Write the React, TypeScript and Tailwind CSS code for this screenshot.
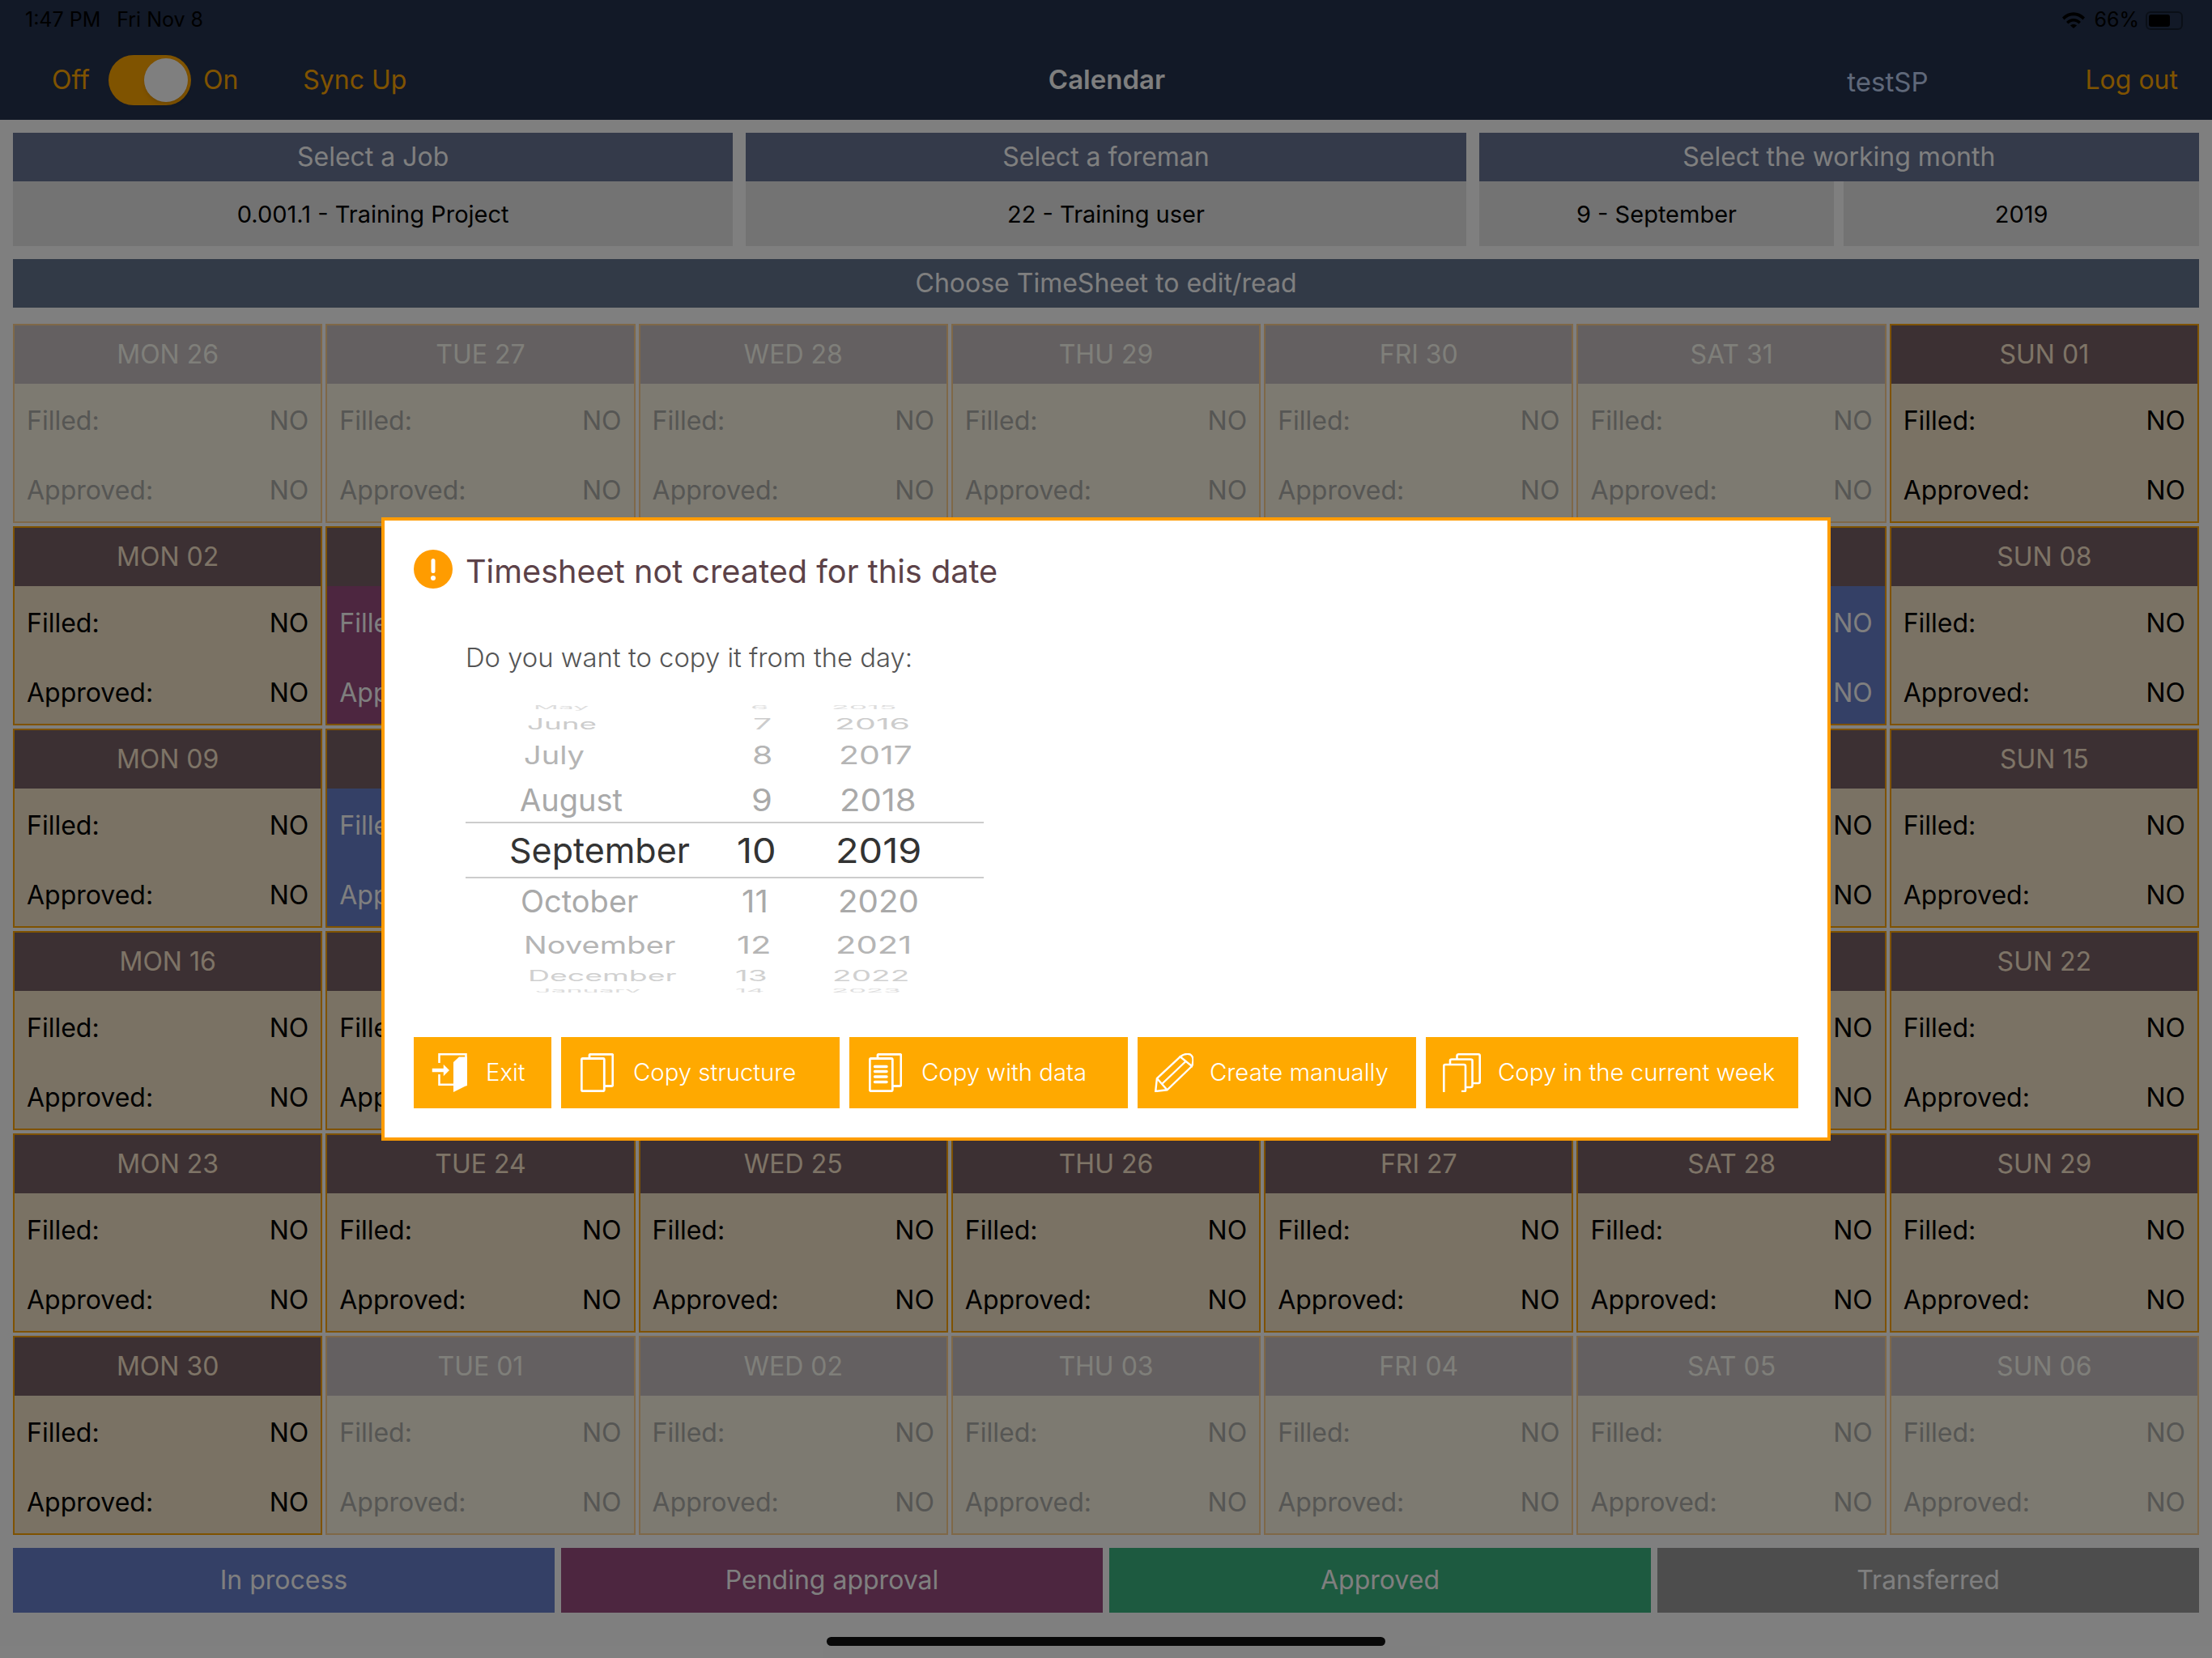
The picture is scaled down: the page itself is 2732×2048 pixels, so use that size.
import { ReactNode } from 'react';

type Status = 'off' | 'open' | 'process' | 'pending';

const weeks: { label: string; status: Status }[][] = [
  [
    { label: 'MON 26', status: 'off' },
    { label: 'TUE 27', status: 'off' },
    { label: 'WED 28', status: 'off' },
    { label: 'THU 29', status: 'off' },
    { label: 'FRI 30', status: 'off' },
    { label: 'SAT 31', status: 'off' },
    { label: 'SUN 01', status: 'open' },
  ],
  [
    { label: 'MON 02', status: 'open' },
    { label: 'TUE 03', status: 'pending' },
    { label: 'WED 04', status: 'open' },
    { label: 'THU 05', status: 'open' },
    { label: 'FRI 06', status: 'open' },
    { label: 'SAT 07', status: 'process' },
    { label: 'SUN 08', status: 'open' },
  ],
  [
    { label: 'MON 09', status: 'open' },
    { label: 'TUE 10', status: 'process' },
    { label: 'WED 11', status: 'open' },
    { label: 'THU 12', status: 'open' },
    { label: 'FRI 13', status: 'open' },
    { label: 'SAT 14', status: 'open' },
    { label: 'SUN 15', status: 'open' },
  ],
  [
    { label: 'MON 16', status: 'open' },
    { label: 'TUE 17', status: 'open' },
    { label: 'WED 18', status: 'open' },
    { label: 'THU 19', status: 'open' },
    { label: 'FRI 20', status: 'open' },
    { label: 'SAT 21', status: 'open' },
    { label: 'SUN 22', status: 'open' },
  ],
  [
    { label: 'MON 23', status: 'open' },
    { label: 'TUE 24', status: 'open' },
    { label: 'WED 25', status: 'open' },
    { label: 'THU 26', status: 'open' },
    { label: 'FRI 27', status: 'open' },
    { label: 'SAT 28', status: 'open' },
    { label: 'SUN 29', status: 'open' },
  ],
  [
    { label: 'MON 30', status: 'open' },
    { label: 'TUE 01', status: 'off' },
    { label: 'WED 02', status: 'off' },
    { label: 'THU 03', status: 'off' },
    { label: 'FRI 04', status: 'off' },
    { label: 'SAT 05', status: 'off' },
    { label: 'SUN 06', status: 'off' },
  ],
];

const cellStyles: Record<Status, { box: string; head: string; body: string }> = {
  off: {
    box: 'border-[#ffd090]',
    head: 'bg-[#c8c0c2] text-[#fffef4]',
    body: 'bg-[#faf4e2] text-[#acaca8]',
  },
  open: {
    box: 'border-[#ffa400]',
    head: 'bg-[#786066] text-[#fce8ce]',
    body: 'bg-[#f4e4c8] text-black',
  },
  process: {
    box: 'border-[#ffa400]',
    head: 'bg-[#786066] text-[#fce8ce]',
    body: 'bg-[#6880cc] text-white',
  },
  pending: {
    box: 'border-[#ffa400]',
    head: 'bg-[#786066] text-[#fce8ce]',
    body: 'bg-[#9a4c80] text-white',
  },
};

function DayCell({ label, status }: { label: string; status: Status }) {
  const s = cellStyles[status];
  return (
    <div className={`h-[246px] border-2 flex flex-col ${s.box}`}>
      <div className={`h-[72px] flex items-center justify-center text-[32px] ${s.head}`}>{label}</div>
      <div className={`flex-1 pl-[15px] pr-[15px] pt-[26px] flex flex-col gap-[46px] text-[32px] ${s.body}`}>
        <div className="flex justify-between leading-[40px]">
          <span>Filled:</span>
          <span>NO</span>
        </div>
        <div className="flex justify-between leading-[40px]">
          <span>Approved:</span>
          <span>NO</span>
        </div>
      </div>
    </div>
  );
}

function SelectBox({ title, children }: { title: string; children: ReactNode }) {
  return (
    <div>
      <div className="h-[60px] bg-[#687494] text-white text-[32px] flex items-center justify-center">{title}</div>
      <div className="h-[80px] flex gap-3 text-black text-[29px]">{children}</div>
    </div>
  );
}

function ValueCell({ text }: { text: string }) {
  return <div className="flex-1 bg-[#e6e6e6] flex items-center justify-center pt-px">{text}</div>;
}

const pickerRows = [
  { h: 'h-[12px]', color: 'text-[#dddddd]', size: 'text-[34px] scale-y-[0.18]', num: 'text-[34px] scale-y-[0.18] scale-x-[1.05]', month: 'May', mx: 'pl-[84px]', day: '6', dx: 'pl-[42px]', year: '2015', yx: 'pl-[27px]' },
  { h: 'h-[28px]', color: 'text-[#cccccc]', size: 'text-[38px] scale-y-[0.48] scale-x-[0.97]', num: 'text-[38px] scale-y-[0.48] scale-x-[1.08]', month: 'June', mx: 'pl-[76px]', day: '7', dx: 'pl-[45px]', year: '2016', yx: 'pl-[31px]' },
  { h: 'h-[50px]', color: 'text-[#b5b5b5]', size: 'text-[38px] scale-y-[0.82]', num: 'text-[38px] scale-y-[0.82] scale-x-[1.08]', month: 'July', mx: 'pl-[72px]', day: '8', dx: 'pl-[44px]', year: '2017', yx: 'pl-[36px]' },
  { h: 'h-[57px] pt-[2px]', color: 'text-[#a9a9a9]', size: 'text-[38px]', num: 'text-[38px] scale-x-[1.1]', month: 'August', mx: 'pl-[67px]', day: '9', dx: 'pl-[43px]', year: '2018', yx: 'pl-[37px]' },
  { h: 'h-[70px] border-y-2 border-[#cccccc]', color: 'text-[#333333]', size: 'text-[43px]', num: 'text-[43px] scale-x-[1.09]', month: 'September', mx: 'pl-[54px]', day: '10', dx: 'pl-[25px]', year: '2019', yx: 'pl-[32px]' },
  { h: 'h-[56px]', color: 'text-[#a9a9a9]', size: 'text-[38px]', num: 'text-[38px] scale-x-[1.06]', month: 'October', mx: 'pl-[68px]', day: '11', dx: 'pl-[31px]', year: '2020', yx: 'pl-[35px]' },
  { h: 'h-[52px]', color: 'text-[#b5b5b5]', size: 'text-[36px] scale-y-[0.82] scale-x-[1.06]', num: 'text-[36px] scale-y-[0.82] scale-x-[1.16]', month: 'November', mx: 'pl-[72px]', day: '12', dx: 'pl-[25px]', year: '2021', yx: 'pl-[32px]' },
  { h: 'h-[24px]', color: 'text-[#d0d0d0]', size: 'text-[38px] scale-y-[0.48] scale-x-[0.985]', num: 'text-[38px] scale-y-[0.48] scale-x-[1.02]', month: 'December', mx: 'pl-[77px]', day: '13', dx: 'pl-[23px]', year: '2022', yx: 'pl-[28px]' },
  { h: 'h-[14px]', color: 'text-[#dddddd]', size: 'text-[34px] scale-y-[0.18]', num: 'text-[34px] scale-y-[0.18] scale-x-[1.02]', month: 'January', mx: 'pl-[86px]', day: '14', dx: 'pl-[23px]', year: '2023', yx: 'pl-[27px]' },
];

function Picker() {
  return (
    <div className="mt-[36px] h-[358px] w-[640px] overflow-hidden">
      {pickerRows.map((r) => (
        <div key={r.month} className={`flex items-center ${r.h} ${r.color}`}>
          <div className={`w-[310px] ${r.mx}`}>
            <div className={`origin-left w-max leading-none ${r.size}`}>{r.month}</div>
          </div>
          <div className={`w-[115px] ${r.dx}`}>
            <div className={`origin-left w-max leading-none ${r.num}`}>{r.day}</div>
          </div>
          <div className={`w-[215px] ${r.yx}`}>
            <div className={`origin-left w-max leading-none ${r.num}`}>{r.year}</div>
          </div>
        </div>
      ))}
    </div>
  );
}

function ExitIcon() {
  return (
    <svg viewBox="0 0 44 48" className="w-[44px] h-[48px]" fill="none" stroke="white" strokeWidth="2.5">
      <path d="M9.5 12V1.3H42.5V39H34" />
      <path d="M9.5 26V38.7H27" />
      <path d="M27 11L34 4.5H44V39.5L27 48Z" fill="white" stroke="none" />
      <path d="M14 12L23 21L14 30V24H0V18H14Z" fill="white" stroke="#ffa900" strokeWidth="1.5" />
    </svg>
  );
}

function CopyIcon({ lines }: { lines?: boolean }) {
  return (
    <svg viewBox="0 0 41 48" className="w-[41px] h-[48px]" fill="none" stroke="white" strokeWidth="2.8">
      <path d="M11 6V2.5Q11 1.3 12.5 1.3H38.5Q39.8 1.3 39.8 2.5V39Q39.8 40.5 38.5 40.5H30" />
      <path d="M2.5 6.5H28Q29.3 6.5 29.3 8V45Q29.3 46.7 28 46.7H2.5Q1.3 46.7 1.3 45V8Q1.3 6.5 2.5 6.5Z" />
      {lines && <path d="M7.5 16.5H22M7.5 22.5H22M7.5 29H22M7.5 35.5H22" strokeWidth="3.5" strokeLinecap="round" />}
    </svg>
  );
}

function PencilIcon() {
  return (
    <svg viewBox="0 0 48 48" className="w-[48px] h-[48px]" fill="none" stroke="white" strokeWidth="2.4">
      <path d="M31.6 4.3L2.9 31L1.2 47L15.5 45.3L46 16" />
      <path d="M31.6 4.3Q38 -0.5 44 1.5Q48 4 47.5 10Q47 14 46 16L31.6 4.3Z" />
      <path d="M38.5 10L9 38M2.9 31L15.5 45.3" />
    </svg>
  );
}

function StackIcon() {
  return (
    <svg viewBox="0 0 47 48" className="w-[47px] h-[48px]" fill="none" stroke="white" strokeWidth="2.6">
      <path d="M1.3 48V16Q1.3 14 3 14H26Q28 14 28 16V46Q28 47 26.5 47H23" />
      <path d="M9 14V9Q9 7.5 11 7.5H34.5Q36.5 7.5 36.5 9V40Q36.5 42 34 42H28" />
      <path d="M17.5 7.5V3Q17.5 1.3 19.5 1.3H44Q45.7 1.3 45.7 3V35Q45.7 37 44 37H36.5" />
    </svg>
  );
}

const buttons = [
  { label: 'Exit', icon: <ExitIcon />, w: 'w-[170px]', pad: 'pl-[22px]', gap: 'gap-[23px]' },
  { label: 'Copy structure', icon: <CopyIcon />, w: 'w-[344px]', pad: 'pl-[24px]', gap: 'gap-[24px]' },
  { label: 'Copy with data', icon: <CopyIcon lines />, w: 'w-[344px]', pad: 'pl-[24px]', gap: 'gap-[24px]' },
  { label: 'Create manually', icon: <PencilIcon />, w: 'w-[344px]', pad: 'pl-[21px]', gap: 'gap-[20px]' },
  { label: 'Copy in the current week', icon: <StackIcon />, w: 'w-[460px]', pad: 'pl-[21px]', gap: 'gap-[21px]' },
];

function TimesheetModal() {
  return (
    <div className="absolute inset-0 bg-black/50 flex items-center justify-center">
      <div className="w-[1790px] h-[770px] bg-white border-4 border-[#ff9c00] p-[36px]">
        <div className="h-[48px] flex items-center gap-[16px]">
          <div className="w-[48px] h-[48px] rounded-full bg-[#ff9c00] flex items-center justify-center">
            <svg viewBox="0 0 48 48" className="w-[48px] h-[48px]" fill="white">
              <rect x="21.5" y="11" width="5" height="18" rx="2.5" />
              <circle cx="24" cy="35" r="3" />
            </svg>
          </div>
          <div className="text-[39.7px] leading-[48px] pt-[5px] text-[#5c4248]">Timesheet not created for this date</div>
        </div>
        <div className="pl-[64px]">
          <div className="mt-[65px] h-[40px] leading-[40px] text-[32.8px] font-light text-[#555555]">Do you want to copy it from the day:</div>
          <Picker />
        </div>
        <div className="mt-[55px] flex gap-3">
          {buttons.map((b) => (
            <div key={b.label} className={`h-[88px] bg-[#ffa900] flex items-center text-white text-[29.3px] font-light ${b.w} ${b.pad} ${b.gap}`}>
              {b.icon}
              <span>{b.label}</span>
            </div>
          ))}
        </div>
      </div>
    </div>
  );
}

export default function App() {
  return (
    <div className="relative w-[2732px] h-[2048px] bg-white overflow-hidden font-['Inter',sans-serif]">
      <div className="h-[148px] bg-[#24324e]">
        <div className="h-[50px] flex items-center justify-between pl-[31px] pr-[36px] text-[25px] text-black">
          <div className="flex gap-[20px]">
            <span>1:47 PM</span>
            <span>Fri Nov 8</span>
          </div>
          <div className="flex items-center gap-[8px]">
            <svg viewBox="0 0 28 20" className="w-[28px] h-[20px] mr-[3px]" fill="black">
              <path d="M0 6.5C8 -2 20 -2 28 6.5L25.5 9.5C19 2.5 9 2.5 2.5 9.5Z" />
              <path d="M5 12C10 6.5 18 6.5 23 12L20.5 14.5C16.5 10.5 11.5 10.5 7.5 14.5Z" />
              <path d="M10 16.5C12 14.5 16 14.5 18 16.5L14 20Z" />
            </svg>
            <span>66%</span>
            <div className="w-[46px] h-[23px] rounded-[6px] border-2 border-black/40 p-[2px]">
              <div className="w-[26px] h-full rounded-[3px] bg-black" />
            </div>
          </div>
        </div>
        <div className="h-[98px] grid grid-cols-3 items-center pl-[64px] pr-[42px] text-[32px]">
          <div className="flex items-center text-[#ffa600]">
            <span>Off</span>
            <div className="ml-[23px] w-[102px] h-[62px] rounded-full bg-[#ffa600] flex items-center justify-end pr-[4px]">
              <div className="w-[54px] h-[54px] rounded-full bg-white shadow-md" />
            </div>
            <span className="ml-[15px]">On</span>
            <span className="ml-[80px]">Sync Up</span>
          </div>
          <div className="text-center text-[33px] font-semibold text-white -translate-x-[10px]">Calendar</div>
          <div className="flex items-center justify-end gap-[194px]">
            <span className="text-[#bed0f2] text-[33px] pt-[6px]">testSP</span>
            <span className="text-[#ffa600]">Log out</span>
          </div>
        </div>
      </div>

      <div className="px-4 pt-4">
        <div className="grid grid-cols-3 gap-4">
          <SelectBox title="Select a Job">
            <ValueCell text="0.001.1 - Training Project" />
          </SelectBox>
          <SelectBox title="Select a foreman">
            <ValueCell text="22 - Training user" />
          </SelectBox>
          <SelectBox title="Select the working month">
            <ValueCell text="9 - September" />
            <ValueCell text="2019" />
          </SelectBox>
        </div>

        <div className="mt-4 h-[60px] bg-[#64748f] text-white text-[32px] flex items-center justify-center">
          Choose TimeSheet to edit/read
        </div>

        <div className="mt-5 grid grid-cols-7 gap-[4px]">
          {weeks.flat().map((d) => (
            <DayCell key={d.label} label={d.label} status={d.status} />
          ))}
        </div>

        <div className="mt-4 grid grid-cols-4 gap-2 text-white text-[32px]">
          <div className="h-[80px] bg-[#6880cc] flex items-center justify-center">In process</div>
          <div className="h-[80px] bg-[#9a4c80] flex items-center justify-center">Pending approval</div>
          <div className="h-[80px] bg-[#3ab480] flex items-center justify-center">Approved</div>
          <div className="h-[80px] bg-[#9a9a9a] flex items-center justify-center">Transferred</div>
        </div>

        <div className="mt-[30px] mx-auto w-[690px] h-[11px] rounded-full bg-[#111111]" />
      </div>

      <TimesheetModal />
    </div>
  );
}
